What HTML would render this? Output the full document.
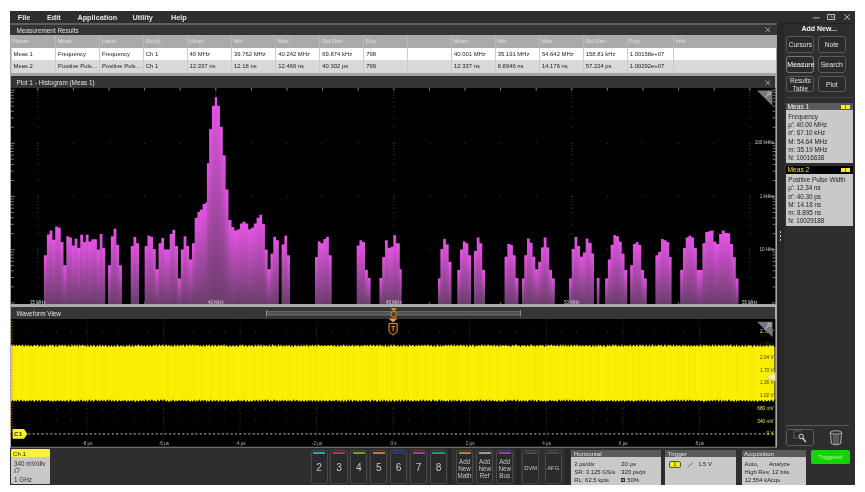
<!DOCTYPE html><html><head><meta charset="utf-8"><title>Oscilloscope</title><style>
*{box-sizing:border-box;margin:0;padding:0}
html,body{width:865px;height:492px;background:#fff;overflow:hidden}
body{font-family:"Liberation Sans",sans-serif;position:relative;color:#ddd}
#app{position:absolute;left:9.5px;top:10.5px;width:845px;height:474px;background:#2e2e2e;overflow:hidden;filter:blur(0.4px)}
.abs{position:absolute}
.t{position:absolute;white-space:nowrap;line-height:1}
.menu{position:absolute;left:0;top:0;width:845px;height:12.5px;background:#2e2e2e}
.menu span{position:absolute;top:3px;font-size:7.3px;font-weight:bold;color:#e4e4e4;line-height:1}
.blk{position:absolute;background:#000}
.ptitle{position:absolute;background:#343434;color:#e0e0e0;font-size:6.4px;line-height:1}
.ptitle b{position:absolute;left:6.6px;top:3.4px;font-weight:normal}
.x{position:absolute;width:5.6px;height:5.6px}
.th{position:absolute;top:0;height:12.7px;font-size:5.8px;color:#e2e2e2;line-height:1;padding:4.6px 0 0 1.5px;border-left:0.7px solid #b8b8b8}
.td{position:absolute;height:12.7px;font-size:5.9px;color:#222;line-height:1;padding:4.1px 0 0 2px;border-left:0.7px solid #ccc;white-space:nowrap;overflow:hidden}
.btn{position:absolute;border:0.8px solid #5a5a5a;border-radius:3px;background:#2b2b2b;color:#e0e0e0;font-size:6.6px;text-align:center;line-height:1}
.badge{position:absolute;background:#c9c9c9;color:#222;font-size:5.9px;line-height:1;overflow:hidden}
.badge .h{position:absolute;left:0;top:0;right:0;height:7.6px;font-size:6.2px;padding:1px 0 0 2.5px;line-height:1}
.badge .l{position:absolute;left:3px;white-space:nowrap}
.chb{position:absolute;top:439.2px;height:34.4px;width:17.2px;background:#2a2a2a;border:0.8px solid #4a4a4a;border-radius:2.5px;color:#c6c6c6;text-align:center}
.chb i{position:absolute;left:1.5px;right:1.5px;top:1.6px;height:2.2px;display:block}
.chb b{position:absolute;left:0;right:0;top:12.2px;font-weight:normal;font-size:10.2px;line-height:1}
.chb em{position:absolute;left:-1px;right:-1px;top:6.9px;font-style:normal;font-size:6.3px;line-height:7.3px;display:block}
</style></head><body><div id="app">
<div class="menu">
<span style="left:8.3px">File</span>
<span style="left:37.5px">Edit</span>
<span style="left:67.9px">Application</span>
<span style="left:123.1px">Utility</span>
<span style="left:161.5px">Help</span>
<svg class="abs" style="left:788px;top:0;width:57px;height:12.5px" viewBox="0 0 57 12.5"><g stroke="#c8c8c8" stroke-width="0.9" fill="none"><path d="M15 6.9h6.6"/><rect x="29.6" y="3.4" width="7" height="5"/><path d="M33 3.6v2.6h3.4" stroke-width="0.6"/><path d="M46.2 3.3l5.8 5.6M52 3.3l-5.8 5.6"/></g></svg>
</div>
<div class="blk" style="left:0;top:12px;width:845px;height:0.7px;background:#222"></div>
<div class="blk" style="left:0.5px;top:12.7px;width:766.5px;height:1.9px;background:#5e5e5e"></div>
<div class="abs" style="left:0.5px;top:14.5px;width:766.5px;height:50.6px;background:#a6a6a6"></div>
<div class="ptitle" style="left:0.5px;top:14.5px;width:766.5px;height:10px"><b style="top:3.4px">Measurement Results</b></div>
<svg class="x" style="left:755px;top:16.6px" viewBox="0 0 6 6"><path d="M0.3 0.3l5.4 5.4M5.7 0.3l-5.4 5.4" stroke="#c4c4c4" stroke-width="0.8"/></svg>
<div class="abs" style="left:1.5px;top:24.4px;width:764.5px;height:12.7px;background:#aaaaaa">
<div class="th" style="left:-0.5px;width:44.5px">Name</div>
<div class="th" style="left:44px;width:44px">Meas</div>
<div class="th" style="left:88px;width:43.8px">Label</div>
<div class="th" style="left:131.8px;width:43.8px">Src(s)</div>
<div class="th" style="left:175.6px;width:44.4px">Mean'</div>
<div class="th" style="left:220px;width:44.2px">Min'</div>
<div class="th" style="left:264.2px;width:44.1px">Max'</div>
<div class="th" style="left:308.3px;width:43.9px">Std Dev'</div>
<div class="th" style="left:352.2px;width:43.8px">Pop'</div>
<div class="th" style="left:396px;width:44px"></div>
<div class="th" style="left:440px;width:43.7px">Mean</div>
<div class="th" style="left:483.7px;width:44.2px">Min</div>
<div class="th" style="left:527.9px;width:43.8px">Max</div>
<div class="th" style="left:571.7px;width:44.1px">Std Dev</div>
<div class="th" style="left:615.8px;width:46.4px">Pop</div>
<div class="th" style="left:662.2px;width:102.3px">Info</div>
</div>
<div class="abs" style="left:1.5px;top:37.1px;width:764.5px;height:12.7px;background:#ffffff">
<div class="td" style="left:-0.5px;width:44.5px;top:0">Meas 1</div>
<div class="td" style="left:44px;width:44px;top:0">Frequency</div>
<div class="td" style="left:88px;width:43.8px;top:0">Frequency</div>
<div class="td" style="left:131.8px;width:43.8px;top:0">Ch 1</div>
<div class="td" style="left:175.6px;width:44.4px;top:0">40 MHz</div>
<div class="td" style="left:220px;width:44.2px;top:0">39.762 MHz</div>
<div class="td" style="left:264.2px;width:44.1px;top:0">40.242 MHz</div>
<div class="td" style="left:308.3px;width:43.9px;top:0">69.874 kHz</div>
<div class="td" style="left:352.2px;width:43.8px;top:0">798</div>
<div class="td" style="left:396px;width:44px;top:0"></div>
<div class="td" style="left:440px;width:43.7px;top:0">40.001 MHz</div>
<div class="td" style="left:483.7px;width:44.2px;top:0">35.191 MHz</div>
<div class="td" style="left:527.9px;width:43.8px;top:0">54.642 MHz</div>
<div class="td" style="left:571.7px;width:44.1px;top:0">158.81 kHz</div>
<div class="td" style="left:615.8px;width:46.4px;top:0">1.00158e+07</div>
<div class="td" style="left:662.2px;width:102.3px;top:0"></div>
</div>
<div class="abs" style="left:1.5px;top:49.8px;width:764.5px;height:12.7px;background:#d9d9d9">
<div class="td" style="left:-0.5px;width:44.5px;top:0">Meas 2</div>
<div class="td" style="left:44px;width:44px;top:0">Positive Puls…</div>
<div class="td" style="left:88px;width:43.8px;top:0">Positive Puls…</div>
<div class="td" style="left:131.8px;width:43.8px;top:0">Ch 1</div>
<div class="td" style="left:175.6px;width:44.4px;top:0">12.337 ns</div>
<div class="td" style="left:220px;width:44.2px;top:0">12.18 ns</div>
<div class="td" style="left:264.2px;width:44.1px;top:0">12.466 ns</div>
<div class="td" style="left:308.3px;width:43.9px;top:0">40.302 ps</div>
<div class="td" style="left:352.2px;width:43.8px;top:0">799</div>
<div class="td" style="left:396px;width:44px;top:0"></div>
<div class="td" style="left:440px;width:43.7px;top:0">12.337 ns</div>
<div class="td" style="left:483.7px;width:44.2px;top:0">8.8946 ns</div>
<div class="td" style="left:527.9px;width:43.8px;top:0">14.176 ns</div>
<div class="td" style="left:571.7px;width:44.1px;top:0">57.224 ps</div>
<div class="td" style="left:615.8px;width:46.4px;top:0">1.00292e+07</div>
<div class="td" style="left:662.2px;width:102.3px;top:0"></div>
</div>
<div class="abs" style="left:0.5px;top:65.1px;width:766.5px;height:231px;background:#a6a6a6"></div>
<div class="ptitle" style="left:1.7px;top:65.3px;width:764.1px;height:12px;border-top:1px solid #2a2a2a"><b style="top:2.8px;left:5.4px">Plot 1 - Histogram (Meas 1)</b></div>
<svg class="x" style="left:755px;top:69.2px" viewBox="0 0 6 6"><path d="M0.3 0.3l5.4 5.4M5.7 0.3l-5.4 5.4" stroke="#c4c4c4" stroke-width="0.8"/></svg>
<svg class="abs" style="left:1.7px;top:77.1px;width:764.4px;height:216.6px" viewBox="11.2 87.6 764.4 216.6">
<defs><linearGradient id="g" x1="0" y1="0" x2="0" y2="1"><stop offset="0" stop-color="#e654e6"/><stop offset="1" stop-color="#6a3e6b"/></linearGradient></defs>
<rect x="11.2" y="87.6" width="764.4" height="216.6" fill="#000"/>
<path d="M38 87.6v2.4M73.6 87.6v2.4M109.2 87.6v2.4M144.8 87.6v2.4M180.4 87.6v2.4M216 87.6v2.4M251.6 87.6v2.4M287.2 87.6v2.4M322.8 87.6v2.4M358.4 87.6v2.4M394 87.6v2.4M429.6 87.6v2.4M465.2 87.6v2.4M500.8 87.6v2.4M536.4 87.6v2.4M572 87.6v2.4M607.6 87.6v2.4M643.2 87.6v2.4M678.8 87.6v2.4M714.4 87.6v2.4M750 87.6v2.4M38 304.2v-2.2M73.6 304.2v-2.2M109.2 304.2v-2.2M144.8 304.2v-2.2M180.4 304.2v-2.2M216 304.2v-2.2M251.6 304.2v-2.2M287.2 304.2v-2.2M322.8 304.2v-2.2M358.4 304.2v-2.2M394 304.2v-2.2M429.6 304.2v-2.2M465.2 304.2v-2.2M500.8 304.2v-2.2M536.4 304.2v-2.2M572 304.2v-2.2M607.6 304.2v-2.2M643.2 304.2v-2.2M678.8 304.2v-2.2M714.4 304.2v-2.2M750 304.2v-2.2" stroke="#c4c4c4" stroke-width="0.7" fill="none"/>
<path d="M11.2 89.7h3.8M775.6 89.7h-3.8M11.2 126.89h2.8M775.6 126.89h-2.8M11.2 117.52h2.8M775.6 117.52h-2.8M11.2 110.87h2.8M775.6 110.87h-2.8M11.2 105.71h2.8M775.6 105.71h-2.8M11.2 101.5h2.8M775.6 101.5h-2.8M11.2 97.94h2.8M775.6 97.94h-2.8M11.2 94.86h2.8M775.6 94.86h-2.8M11.2 92.13h2.8M775.6 92.13h-2.8M11.2 142.9h3.8M775.6 142.9h-3.8M11.2 180.09h2.8M775.6 180.09h-2.8M11.2 170.72h2.8M775.6 170.72h-2.8M11.2 164.07h2.8M775.6 164.07h-2.8M11.2 158.91h2.8M775.6 158.91h-2.8M11.2 154.7h2.8M775.6 154.7h-2.8M11.2 151.14h2.8M775.6 151.14h-2.8M11.2 148.06h2.8M775.6 148.06h-2.8M11.2 145.33h2.8M775.6 145.33h-2.8M11.2 196.1h3.8M775.6 196.1h-3.8M11.2 233.29h2.8M775.6 233.29h-2.8M11.2 223.92h2.8M775.6 223.92h-2.8M11.2 217.27h2.8M775.6 217.27h-2.8M11.2 212.11h2.8M775.6 212.11h-2.8M11.2 207.9h2.8M775.6 207.9h-2.8M11.2 204.34h2.8M775.6 204.34h-2.8M11.2 201.26h2.8M775.6 201.26h-2.8M11.2 198.53h2.8M775.6 198.53h-2.8M11.2 249.3h3.8M775.6 249.3h-3.8M11.2 286.49h2.8M775.6 286.49h-2.8M11.2 277.12h2.8M775.6 277.12h-2.8M11.2 270.47h2.8M775.6 270.47h-2.8M11.2 265.31h2.8M775.6 265.31h-2.8M11.2 261.1h2.8M775.6 261.1h-2.8M11.2 257.54h2.8M775.6 257.54h-2.8M11.2 254.46h2.8M775.6 254.46h-2.8M11.2 251.73h2.8M775.6 251.73h-2.8M11.2 302.5h3.8M775.6 302.5h-3.8" stroke="#c8c8c8" stroke-width="0.6" fill="none"/>
<path d="M37.55 89.7h0.9M37.55 126.89h0.9M37.55 117.52h0.9M37.55 110.87h0.9M37.55 105.71h0.9M37.55 101.5h0.9M37.55 97.94h0.9M37.55 94.86h0.9M37.55 92.13h0.9M37.55 142.9h0.9M37.55 180.09h0.9M37.55 170.72h0.9M37.55 164.07h0.9M37.55 158.91h0.9M37.55 154.7h0.9M37.55 151.14h0.9M37.55 148.06h0.9M37.55 145.33h0.9M37.55 196.1h0.9M37.55 233.29h0.9M37.55 223.92h0.9M37.55 217.27h0.9M37.55 212.11h0.9M37.55 207.9h0.9M37.55 204.34h0.9M37.55 201.26h0.9M37.55 198.53h0.9M37.55 249.3h0.9M37.55 286.49h0.9M37.55 277.12h0.9M37.55 270.47h0.9M37.55 265.31h0.9M37.55 261.1h0.9M37.55 257.54h0.9M37.55 254.46h0.9M37.55 251.73h0.9M37.55 302.5h0.9M215.55 89.7h0.9M215.55 126.89h0.9M215.55 117.52h0.9M215.55 110.87h0.9M215.55 105.71h0.9M215.55 101.5h0.9M215.55 97.94h0.9M215.55 94.86h0.9M215.55 92.13h0.9M215.55 142.9h0.9M215.55 180.09h0.9M215.55 170.72h0.9M215.55 164.07h0.9M215.55 158.91h0.9M215.55 154.7h0.9M215.55 151.14h0.9M215.55 148.06h0.9M215.55 145.33h0.9M215.55 196.1h0.9M215.55 233.29h0.9M215.55 223.92h0.9M215.55 217.27h0.9M215.55 212.11h0.9M215.55 207.9h0.9M215.55 204.34h0.9M215.55 201.26h0.9M215.55 198.53h0.9M215.55 249.3h0.9M215.55 286.49h0.9M215.55 277.12h0.9M215.55 270.47h0.9M215.55 265.31h0.9M215.55 261.1h0.9M215.55 257.54h0.9M215.55 254.46h0.9M215.55 251.73h0.9M215.55 302.5h0.9M393.55 89.7h0.9M393.55 126.89h0.9M393.55 117.52h0.9M393.55 110.87h0.9M393.55 105.71h0.9M393.55 101.5h0.9M393.55 97.94h0.9M393.55 94.86h0.9M393.55 92.13h0.9M393.55 142.9h0.9M393.55 180.09h0.9M393.55 170.72h0.9M393.55 164.07h0.9M393.55 158.91h0.9M393.55 154.7h0.9M393.55 151.14h0.9M393.55 148.06h0.9M393.55 145.33h0.9M393.55 196.1h0.9M393.55 233.29h0.9M393.55 223.92h0.9M393.55 217.27h0.9M393.55 212.11h0.9M393.55 207.9h0.9M393.55 204.34h0.9M393.55 201.26h0.9M393.55 198.53h0.9M393.55 249.3h0.9M393.55 286.49h0.9M393.55 277.12h0.9M393.55 270.47h0.9M393.55 265.31h0.9M393.55 261.1h0.9M393.55 257.54h0.9M393.55 254.46h0.9M393.55 251.73h0.9M393.55 302.5h0.9M571.55 89.7h0.9M571.55 126.89h0.9M571.55 117.52h0.9M571.55 110.87h0.9M571.55 105.71h0.9M571.55 101.5h0.9M571.55 97.94h0.9M571.55 94.86h0.9M571.55 92.13h0.9M571.55 142.9h0.9M571.55 180.09h0.9M571.55 170.72h0.9M571.55 164.07h0.9M571.55 158.91h0.9M571.55 154.7h0.9M571.55 151.14h0.9M571.55 148.06h0.9M571.55 145.33h0.9M571.55 196.1h0.9M571.55 233.29h0.9M571.55 223.92h0.9M571.55 217.27h0.9M571.55 212.11h0.9M571.55 207.9h0.9M571.55 204.34h0.9M571.55 201.26h0.9M571.55 198.53h0.9M571.55 249.3h0.9M571.55 286.49h0.9M571.55 277.12h0.9M571.55 270.47h0.9M571.55 265.31h0.9M571.55 261.1h0.9M571.55 257.54h0.9M571.55 254.46h0.9M571.55 251.73h0.9M571.55 302.5h0.9M749.55 89.7h0.9M749.55 126.89h0.9M749.55 117.52h0.9M749.55 110.87h0.9M749.55 105.71h0.9M749.55 101.5h0.9M749.55 97.94h0.9M749.55 94.86h0.9M749.55 92.13h0.9M749.55 142.9h0.9M749.55 180.09h0.9M749.55 170.72h0.9M749.55 164.07h0.9M749.55 158.91h0.9M749.55 154.7h0.9M749.55 151.14h0.9M749.55 148.06h0.9M749.55 145.33h0.9M749.55 196.1h0.9M749.55 233.29h0.9M749.55 223.92h0.9M749.55 217.27h0.9M749.55 212.11h0.9M749.55 207.9h0.9M749.55 204.34h0.9M749.55 201.26h0.9M749.55 198.53h0.9M749.55 249.3h0.9M749.55 286.49h0.9M749.55 277.12h0.9M749.55 270.47h0.9M749.55 265.31h0.9M749.55 261.1h0.9M749.55 257.54h0.9M749.55 254.46h0.9M749.55 251.73h0.9M749.55 302.5h0.9M37.55 89.7h0.9M73.15 89.7h0.9M108.75 89.7h0.9M144.35 89.7h0.9M179.95 89.7h0.9M215.55 89.7h0.9M251.15 89.7h0.9M286.75 89.7h0.9M322.35 89.7h0.9M357.95 89.7h0.9M393.55 89.7h0.9M429.15 89.7h0.9M464.75 89.7h0.9M500.35 89.7h0.9M535.95 89.7h0.9M571.55 89.7h0.9M607.15 89.7h0.9M642.75 89.7h0.9M678.35 89.7h0.9M713.95 89.7h0.9M749.55 89.7h0.9M37.55 142.9h0.9M73.15 142.9h0.9M108.75 142.9h0.9M144.35 142.9h0.9M179.95 142.9h0.9M215.55 142.9h0.9M251.15 142.9h0.9M286.75 142.9h0.9M322.35 142.9h0.9M357.95 142.9h0.9M393.55 142.9h0.9M429.15 142.9h0.9M464.75 142.9h0.9M500.35 142.9h0.9M535.95 142.9h0.9M571.55 142.9h0.9M607.15 142.9h0.9M642.75 142.9h0.9M678.35 142.9h0.9M713.95 142.9h0.9M749.55 142.9h0.9M37.55 196.1h0.9M73.15 196.1h0.9M108.75 196.1h0.9M144.35 196.1h0.9M179.95 196.1h0.9M215.55 196.1h0.9M251.15 196.1h0.9M286.75 196.1h0.9M322.35 196.1h0.9M357.95 196.1h0.9M393.55 196.1h0.9M429.15 196.1h0.9M464.75 196.1h0.9M500.35 196.1h0.9M535.95 196.1h0.9M571.55 196.1h0.9M607.15 196.1h0.9M642.75 196.1h0.9M678.35 196.1h0.9M713.95 196.1h0.9M749.55 196.1h0.9M37.55 249.3h0.9M73.15 249.3h0.9M108.75 249.3h0.9M144.35 249.3h0.9M179.95 249.3h0.9M215.55 249.3h0.9M251.15 249.3h0.9M286.75 249.3h0.9M322.35 249.3h0.9M357.95 249.3h0.9M393.55 249.3h0.9M429.15 249.3h0.9M464.75 249.3h0.9M500.35 249.3h0.9M535.95 249.3h0.9M571.55 249.3h0.9M607.15 249.3h0.9M642.75 249.3h0.9M678.35 249.3h0.9M713.95 249.3h0.9M749.55 249.3h0.9M37.55 302.5h0.9M73.15 302.5h0.9M108.75 302.5h0.9M144.35 302.5h0.9M179.95 302.5h0.9M215.55 302.5h0.9M251.15 302.5h0.9M286.75 302.5h0.9M322.35 302.5h0.9M357.95 302.5h0.9M393.55 302.5h0.9M429.15 302.5h0.9M464.75 302.5h0.9M500.35 302.5h0.9M535.95 302.5h0.9M571.55 302.5h0.9M607.15 302.5h0.9M642.75 302.5h0.9M678.35 302.5h0.9M713.95 302.5h0.9M749.55 302.5h0.9" stroke="#5c5c5c" stroke-width="0.8" fill="none"/>
<rect x="46.35" y="254.92" width="1.4" height="48.98" fill="url(#g)"/>
<rect x="49.13" y="234.07" width="1.4" height="69.83" fill="url(#g)"/>
<rect x="51.91" y="239.4" width="1.4" height="64.5" fill="url(#g)"/>
<rect x="54.69" y="239.4" width="1.4" height="64.5" fill="url(#g)"/>
<rect x="57.47" y="227.35" width="1.4" height="76.55" fill="url(#g)"/>
<rect x="60.25" y="241.71" width="1.4" height="62.19" fill="url(#g)"/>
<rect x="63.03" y="264.89" width="1.4" height="39.01" fill="url(#g)"/>
<rect x="65.81" y="264.89" width="1.4" height="39.01" fill="url(#g)"/>
<rect x="68.59" y="237.08" width="1.4" height="66.82" fill="url(#g)"/>
<rect x="71.37" y="245.19" width="1.4" height="58.71" fill="url(#g)"/>
<rect x="74.16" y="245.19" width="1.4" height="58.71" fill="url(#g)"/>
<rect x="76.94" y="247.51" width="1.4" height="56.39" fill="url(#g)"/>
<rect x="79.72" y="247.51" width="1.4" height="56.39" fill="url(#g)"/>
<rect x="82.5" y="241.71" width="1.4" height="62.19" fill="url(#g)"/>
<rect x="85.28" y="241.71" width="1.4" height="62.19" fill="url(#g)"/>
<rect x="88.06" y="241.25" width="1.4" height="62.65" fill="url(#g)"/>
<rect x="90.84" y="241.25" width="1.4" height="62.65" fill="url(#g)"/>
<rect x="93.62" y="238.93" width="1.4" height="64.97" fill="url(#g)"/>
<rect x="96.4" y="249.13" width="1.4" height="54.77" fill="url(#g)"/>
<rect x="99.18" y="249.13" width="1.4" height="54.77" fill="url(#g)"/>
<rect x="101.97" y="247.51" width="1.4" height="56.39" fill="url(#g)"/>
<rect x="110.31" y="264.89" width="1.4" height="39.01" fill="url(#g)"/>
<rect x="113.09" y="235.92" width="1.4" height="67.98" fill="url(#g)"/>
<rect x="115.87" y="244.5" width="1.4" height="59.4" fill="url(#g)"/>
<rect x="118.65" y="264.89" width="1.4" height="39.01" fill="url(#g)"/>
<rect x="133.02" y="245.65" width="1.4" height="58.25" fill="url(#g)"/>
<rect x="135.8" y="242.87" width="1.4" height="61.03" fill="url(#g)"/>
<rect x="146.92" y="245.65" width="1.4" height="58.25" fill="url(#g)"/>
<rect x="149.71" y="236.38" width="1.4" height="67.52" fill="url(#g)"/>
<rect x="152.49" y="248.67" width="1.4" height="55.23" fill="url(#g)"/>
<rect x="155.27" y="268.83" width="1.4" height="35.07" fill="url(#g)"/>
<rect x="158.05" y="268.83" width="1.4" height="35.07" fill="url(#g)"/>
<rect x="160.83" y="242.87" width="1.4" height="61.03" fill="url(#g)"/>
<rect x="163.61" y="249.13" width="1.4" height="54.77" fill="url(#g)"/>
<rect x="166.39" y="249.13" width="1.4" height="54.77" fill="url(#g)"/>
<rect x="169.17" y="249.13" width="1.4" height="54.77" fill="url(#g)"/>
<rect x="171.95" y="233.6" width="1.4" height="70.3" fill="url(#g)"/>
<rect x="174.73" y="245.65" width="1.4" height="58.25" fill="url(#g)"/>
<rect x="177.52" y="278.1" width="1.4" height="25.8" fill="url(#g)"/>
<rect x="180.3" y="278.1" width="1.4" height="25.8" fill="url(#g)"/>
<rect x="183.08" y="249.13" width="1.4" height="54.77" fill="url(#g)"/>
<rect x="185.86" y="245.65" width="1.4" height="58.25" fill="url(#g)"/>
<rect x="188.64" y="259.1" width="1.4" height="44.8" fill="url(#g)"/>
<rect x="191.42" y="259.1" width="1.4" height="44.8" fill="url(#g)"/>
<rect x="194.2" y="242.87" width="1.4" height="61.03" fill="url(#g)"/>
<rect x="196.98" y="217.38" width="1.4" height="86.52" fill="url(#g)"/>
<rect x="202.08" y="209.27" width="1.4" height="94.63" fill="url(#g)"/>
<rect x="204.86" y="203.48" width="1.4" height="100.42" fill="url(#g)"/>
<rect x="206.4" y="202" width="1.4" height="101.9" fill="url(#g)"/>
<rect x="208.62" y="162.92" width="1.4" height="140.98" fill="url(#g)"/>
<rect x="211.47" y="128.74" width="1.4" height="175.16" fill="url(#g)"/>
<rect x="214.31" y="105.37" width="1.4" height="198.53" fill="url(#g)"/>
<rect x="216.59" y="105.37" width="1.4" height="198.53" fill="url(#g)"/>
<rect x="219.44" y="126.46" width="1.4" height="177.44" fill="url(#g)"/>
<rect x="222.29" y="154.95" width="1.4" height="148.95" fill="url(#g)"/>
<rect x="225.14" y="189.13" width="1.4" height="114.77" fill="url(#g)"/>
<rect x="227.99" y="219.7" width="1.4" height="84.2" fill="url(#g)"/>
<rect x="231.05" y="226.65" width="1.4" height="77.25" fill="url(#g)"/>
<rect x="233.83" y="230.13" width="1.4" height="73.77" fill="url(#g)"/>
<rect x="236.61" y="230.13" width="1.4" height="73.77" fill="url(#g)"/>
<rect x="239.39" y="228.97" width="1.4" height="74.93" fill="url(#g)"/>
<rect x="242.17" y="223.17" width="1.4" height="80.73" fill="url(#g)"/>
<rect x="244.95" y="223.17" width="1.4" height="80.73" fill="url(#g)"/>
<rect x="247.74" y="228.97" width="1.4" height="74.93" fill="url(#g)"/>
<rect x="250.52" y="228.97" width="1.4" height="74.93" fill="url(#g)"/>
<rect x="253.3" y="227.35" width="1.4" height="76.55" fill="url(#g)"/>
<rect x="256.08" y="223.17" width="1.4" height="80.73" fill="url(#g)"/>
<rect x="258.86" y="217.38" width="1.4" height="86.52" fill="url(#g)"/>
<rect x="261.64" y="223.64" width="1.4" height="80.26" fill="url(#g)"/>
<rect x="264.42" y="249.13" width="1.4" height="54.77" fill="url(#g)"/>
<rect x="267.2" y="268.83" width="1.4" height="35.07" fill="url(#g)"/>
<rect x="269.98" y="268.83" width="1.4" height="35.07" fill="url(#g)"/>
<rect x="272.76" y="253.3" width="1.4" height="50.6" fill="url(#g)"/>
<rect x="275.55" y="239.86" width="1.4" height="64.04" fill="url(#g)"/>
<rect x="283.89" y="244.03" width="1.4" height="59.87" fill="url(#g)"/>
<rect x="286.67" y="254.92" width="1.4" height="48.98" fill="url(#g)"/>
<rect x="317.26" y="256.78" width="1.4" height="47.12" fill="url(#g)"/>
<rect x="320.04" y="242.87" width="1.4" height="61.03" fill="url(#g)"/>
<rect x="322.82" y="242.87" width="1.4" height="61.03" fill="url(#g)"/>
<rect x="325.6" y="238.7" width="1.4" height="65.2" fill="url(#g)"/>
<rect x="328.38" y="254.92" width="1.4" height="48.98" fill="url(#g)"/>
<rect x="358.98" y="245.19" width="1.4" height="58.71" fill="url(#g)"/>
<rect x="361.76" y="241.71" width="1.4" height="62.19" fill="url(#g)"/>
<rect x="364.54" y="269.52" width="1.4" height="34.38" fill="url(#g)"/>
<rect x="367.32" y="277.64" width="1.4" height="26.26" fill="url(#g)"/>
<rect x="381.69" y="277.64" width="1.4" height="26.26" fill="url(#g)"/>
<rect x="384.47" y="256.78" width="1.4" height="47.12" fill="url(#g)"/>
<rect x="387.25" y="247.51" width="1.4" height="56.39" fill="url(#g)"/>
<rect x="390.03" y="247.51" width="1.4" height="56.39" fill="url(#g)"/>
<rect x="392.81" y="246.35" width="1.4" height="57.55" fill="url(#g)"/>
<rect x="395.59" y="242.87" width="1.4" height="61.03" fill="url(#g)"/>
<rect x="399.3" y="268.83" width="1.4" height="35.07" fill="url(#g)"/>
<rect x="439.86" y="278.1" width="1.4" height="25.8" fill="url(#g)"/>
<rect x="442.64" y="248.67" width="1.4" height="55.23" fill="url(#g)"/>
<rect x="445.42" y="244.03" width="1.4" height="59.87" fill="url(#g)"/>
<rect x="448.2" y="261.41" width="1.4" height="42.49" fill="url(#g)"/>
<rect x="459.55" y="269.52" width="1.4" height="34.38" fill="url(#g)"/>
<rect x="462.34" y="249.13" width="1.4" height="54.77" fill="url(#g)"/>
<rect x="465.12" y="242.87" width="1.4" height="61.03" fill="url(#g)"/>
<rect x="467.9" y="254.92" width="1.4" height="48.98" fill="url(#g)"/>
<rect x="476.24" y="250.52" width="1.4" height="53.38" fill="url(#g)"/>
<rect x="479.02" y="242.87" width="1.4" height="61.03" fill="url(#g)"/>
<rect x="481.8" y="269.52" width="1.4" height="34.38" fill="url(#g)"/>
<rect x="506.83" y="256.32" width="1.4" height="47.58" fill="url(#g)"/>
<rect x="509.61" y="244.5" width="1.4" height="59.4" fill="url(#g)"/>
<rect x="512.39" y="254.92" width="1.4" height="48.98" fill="url(#g)"/>
<rect x="515.17" y="277.64" width="1.4" height="26.26" fill="url(#g)"/>
<rect x="523.75" y="278.1" width="1.4" height="25.8" fill="url(#g)"/>
<rect x="526.53" y="254.92" width="1.4" height="48.98" fill="url(#g)"/>
<rect x="529.31" y="242.41" width="1.4" height="61.49" fill="url(#g)"/>
<rect x="532.09" y="256.32" width="1.4" height="47.58" fill="url(#g)"/>
<rect x="534.87" y="268.83" width="1.4" height="35.07" fill="url(#g)"/>
<rect x="537.65" y="268.83" width="1.4" height="35.07" fill="url(#g)"/>
<rect x="540.44" y="261.41" width="1.4" height="42.49" fill="url(#g)"/>
<rect x="543.22" y="247.05" width="1.4" height="56.85" fill="url(#g)"/>
<rect x="546" y="247.05" width="1.4" height="56.85" fill="url(#g)"/>
<rect x="548.78" y="269.52" width="1.4" height="34.38" fill="url(#g)"/>
<rect x="551.56" y="278.1" width="1.4" height="25.8" fill="url(#g)"/>
<rect x="571.26" y="278.1" width="1.4" height="25.8" fill="url(#g)"/>
<rect x="574.04" y="248.67" width="1.4" height="55.23" fill="url(#g)"/>
<rect x="576.82" y="245.65" width="1.4" height="58.25" fill="url(#g)"/>
<rect x="579.6" y="256.32" width="1.4" height="47.58" fill="url(#g)"/>
<rect x="582.38" y="256.32" width="1.4" height="47.58" fill="url(#g)"/>
<rect x="585.16" y="252.14" width="1.4" height="51.76" fill="url(#g)"/>
<rect x="587.94" y="242.41" width="1.4" height="61.49" fill="url(#g)"/>
<rect x="591.15" y="253.3" width="1.4" height="50.6" fill="url(#g)"/>
<rect x="607.38" y="278.1" width="1.4" height="25.8" fill="url(#g)"/>
<rect x="610.16" y="259.1" width="1.4" height="44.8" fill="url(#g)"/>
<rect x="612.94" y="244.5" width="1.4" height="59.4" fill="url(#g)"/>
<rect x="615.72" y="235.92" width="1.4" height="67.98" fill="url(#g)"/>
<rect x="618.5" y="241.25" width="1.4" height="62.65" fill="url(#g)"/>
<rect x="621.28" y="253.3" width="1.4" height="50.6" fill="url(#g)"/>
<rect x="624.06" y="269.52" width="1.4" height="34.38" fill="url(#g)"/>
<rect x="632.41" y="264.89" width="1.4" height="39.01" fill="url(#g)"/>
<rect x="635.19" y="243.57" width="1.4" height="60.33" fill="url(#g)"/>
<rect x="637.97" y="244.5" width="1.4" height="59.4" fill="url(#g)"/>
<rect x="640.75" y="269.52" width="1.4" height="34.38" fill="url(#g)"/>
<rect x="643.53" y="278.1" width="1.4" height="25.8" fill="url(#g)"/>
<rect x="657.67" y="254.92" width="1.4" height="48.98" fill="url(#g)"/>
<rect x="660.45" y="251.45" width="1.4" height="52.45" fill="url(#g)"/>
<rect x="663.23" y="239.86" width="1.4" height="64.04" fill="url(#g)"/>
<rect x="666.01" y="241.71" width="1.4" height="62.19" fill="url(#g)"/>
<rect x="668.79" y="256.78" width="1.4" height="47.12" fill="url(#g)"/>
<rect x="682.46" y="269.52" width="1.4" height="34.38" fill="url(#g)"/>
<rect x="685.24" y="247.51" width="1.4" height="56.39" fill="url(#g)"/>
<rect x="688.03" y="237.08" width="1.4" height="66.82" fill="url(#g)"/>
<rect x="690.81" y="237.08" width="1.4" height="66.82" fill="url(#g)"/>
<rect x="693.59" y="247.51" width="1.4" height="56.39" fill="url(#g)"/>
<rect x="696.37" y="269.52" width="1.4" height="34.38" fill="url(#g)"/>
<rect x="699.15" y="269.52" width="1.4" height="34.38" fill="url(#g)"/>
<rect x="701.93" y="269.52" width="1.4" height="34.38" fill="url(#g)"/>
<rect x="704.71" y="242.87" width="1.4" height="61.03" fill="url(#g)"/>
<rect x="707.49" y="231.75" width="1.4" height="72.15" fill="url(#g)"/>
<rect x="710.27" y="230.82" width="1.4" height="73.08" fill="url(#g)"/>
<rect x="713.05" y="241.25" width="1.4" height="62.65" fill="url(#g)"/>
<rect x="715.84" y="243.57" width="1.4" height="60.33" fill="url(#g)"/>
<rect x="718.62" y="243.57" width="1.4" height="60.33" fill="url(#g)"/>
<rect x="721.4" y="233.6" width="1.4" height="70.3" fill="url(#g)"/>
<rect x="724.18" y="232.44" width="1.4" height="71.46" fill="url(#g)"/>
<rect x="726.96" y="232.91" width="1.4" height="70.99" fill="url(#g)"/>
<rect x="729.74" y="243.57" width="1.4" height="60.33" fill="url(#g)"/>
<rect x="732.52" y="256.78" width="1.4" height="47.12" fill="url(#g)"/>
<rect x="735.3" y="278.1" width="1.4" height="25.8" fill="url(#g)"/>
<rect x="44.03" y="254.92" width="3.01" height="48.98" fill="url(#g)"/>
<rect x="47.05" y="234.07" width="2.78" height="69.83" fill="url(#g)"/>
<rect x="49.83" y="230.13" width="2.78" height="73.77" fill="url(#g)"/>
<rect x="52.61" y="239.4" width="2.78" height="64.5" fill="url(#g)"/>
<rect x="55.39" y="226.19" width="2.78" height="77.71" fill="url(#g)"/>
<rect x="58.17" y="227.35" width="2.78" height="76.55" fill="url(#g)"/>
<rect x="60.95" y="241.71" width="2.78" height="62.19" fill="url(#g)"/>
<rect x="63.73" y="264.89" width="2.78" height="39.01" fill="url(#g)"/>
<rect x="66.51" y="235.92" width="2.78" height="67.98" fill="url(#g)"/>
<rect x="69.29" y="237.08" width="2.78" height="66.82" fill="url(#g)"/>
<rect x="72.07" y="245.19" width="2.78" height="58.71" fill="url(#g)"/>
<rect x="74.86" y="238.24" width="2.78" height="65.66" fill="url(#g)"/>
<rect x="77.64" y="247.51" width="2.78" height="56.39" fill="url(#g)"/>
<rect x="80.42" y="234.3" width="2.78" height="69.6" fill="url(#g)"/>
<rect x="83.2" y="241.71" width="2.78" height="62.19" fill="url(#g)"/>
<rect x="85.98" y="234.3" width="2.78" height="69.6" fill="url(#g)"/>
<rect x="88.76" y="241.25" width="2.78" height="62.65" fill="url(#g)"/>
<rect x="91.54" y="238.93" width="2.78" height="64.97" fill="url(#g)"/>
<rect x="94.32" y="238.93" width="2.78" height="64.97" fill="url(#g)"/>
<rect x="97.1" y="249.13" width="2.78" height="54.77" fill="url(#g)"/>
<rect x="99.88" y="233.6" width="2.78" height="70.3" fill="url(#g)"/>
<rect x="102.67" y="247.51" width="2.78" height="56.39" fill="url(#g)"/>
<rect x="108.23" y="264.89" width="2.78" height="39.01" fill="url(#g)"/>
<rect x="111.01" y="235.92" width="2.78" height="67.98" fill="url(#g)"/>
<rect x="113.79" y="228.27" width="2.78" height="75.63" fill="url(#g)"/>
<rect x="116.57" y="244.5" width="2.78" height="59.4" fill="url(#g)"/>
<rect x="119.35" y="264.89" width="2.78" height="39.01" fill="url(#g)"/>
<rect x="130.94" y="245.65" width="2.78" height="58.25" fill="url(#g)"/>
<rect x="133.72" y="236.62" width="2.78" height="67.28" fill="url(#g)"/>
<rect x="136.5" y="242.87" width="2.78" height="61.03" fill="url(#g)"/>
<rect x="144.84" y="245.65" width="2.78" height="58.25" fill="url(#g)"/>
<rect x="147.62" y="235.23" width="2.78" height="68.67" fill="url(#g)"/>
<rect x="150.41" y="236.38" width="2.78" height="67.52" fill="url(#g)"/>
<rect x="153.19" y="248.67" width="2.78" height="55.23" fill="url(#g)"/>
<rect x="155.97" y="268.83" width="2.78" height="35.07" fill="url(#g)"/>
<rect x="158.75" y="242.87" width="2.78" height="61.03" fill="url(#g)"/>
<rect x="161.53" y="237.54" width="2.78" height="66.36" fill="url(#g)"/>
<rect x="164.31" y="249.13" width="2.78" height="54.77" fill="url(#g)"/>
<rect x="167.09" y="249.13" width="2.78" height="54.77" fill="url(#g)"/>
<rect x="169.87" y="233.6" width="2.78" height="70.3" fill="url(#g)"/>
<rect x="172.65" y="229.43" width="2.78" height="74.47" fill="url(#g)"/>
<rect x="175.43" y="245.65" width="2.78" height="58.25" fill="url(#g)"/>
<rect x="178.22" y="278.1" width="2.78" height="25.8" fill="url(#g)"/>
<rect x="181" y="249.13" width="2.78" height="54.77" fill="url(#g)"/>
<rect x="183.78" y="235.92" width="2.78" height="67.98" fill="url(#g)"/>
<rect x="186.56" y="245.65" width="2.78" height="58.25" fill="url(#g)"/>
<rect x="189.34" y="259.1" width="2.78" height="44.8" fill="url(#g)"/>
<rect x="192.12" y="242.87" width="2.78" height="61.03" fill="url(#g)"/>
<rect x="194.9" y="217.38" width="2.78" height="86.52" fill="url(#g)"/>
<rect x="197.68" y="211.59" width="2.78" height="92.31" fill="url(#g)"/>
<rect x="200" y="209.27" width="2.78" height="94.63" fill="url(#g)"/>
<rect x="202.78" y="203.48" width="2.78" height="100.42" fill="url(#g)"/>
<rect x="205.56" y="202" width="1.54" height="101.9" fill="url(#g)"/>
<rect x="207.1" y="162.92" width="2.22" height="140.98" fill="url(#g)"/>
<rect x="209.32" y="128.74" width="2.85" height="175.16" fill="url(#g)"/>
<rect x="212.17" y="105.37" width="2.85" height="198.53" fill="url(#g)"/>
<rect x="215.01" y="96.83" width="2.28" height="207.07" fill="url(#g)"/>
<rect x="217.29" y="105.37" width="2.85" height="198.53" fill="url(#g)"/>
<rect x="220.14" y="126.46" width="2.85" height="177.44" fill="url(#g)"/>
<rect x="222.99" y="154.95" width="2.85" height="148.95" fill="url(#g)"/>
<rect x="225.84" y="189.13" width="2.85" height="114.77" fill="url(#g)"/>
<rect x="228.69" y="219.7" width="3.06" height="84.2" fill="url(#g)"/>
<rect x="231.75" y="226.65" width="2.78" height="77.25" fill="url(#g)"/>
<rect x="234.53" y="230.13" width="2.78" height="73.77" fill="url(#g)"/>
<rect x="237.31" y="228.97" width="2.78" height="74.93" fill="url(#g)"/>
<rect x="240.09" y="223.17" width="2.78" height="80.73" fill="url(#g)"/>
<rect x="242.87" y="221.32" width="2.78" height="82.58" fill="url(#g)"/>
<rect x="245.65" y="223.17" width="2.78" height="80.73" fill="url(#g)"/>
<rect x="248.44" y="228.97" width="2.78" height="74.93" fill="url(#g)"/>
<rect x="251.22" y="227.35" width="2.78" height="76.55" fill="url(#g)"/>
<rect x="254" y="223.17" width="2.78" height="80.73" fill="url(#g)"/>
<rect x="256.78" y="217.38" width="2.78" height="86.52" fill="url(#g)"/>
<rect x="259.56" y="214.37" width="2.78" height="89.53" fill="url(#g)"/>
<rect x="262.34" y="223.64" width="2.78" height="80.26" fill="url(#g)"/>
<rect x="265.12" y="249.13" width="2.78" height="54.77" fill="url(#g)"/>
<rect x="267.9" y="268.83" width="2.78" height="35.07" fill="url(#g)"/>
<rect x="270.68" y="253.3" width="2.78" height="50.6" fill="url(#g)"/>
<rect x="273.46" y="236.38" width="2.78" height="67.52" fill="url(#g)"/>
<rect x="276.25" y="239.86" width="2.78" height="64.04" fill="url(#g)"/>
<rect x="281.81" y="244.03" width="2.78" height="59.87" fill="url(#g)"/>
<rect x="284.59" y="235.23" width="2.78" height="68.67" fill="url(#g)"/>
<rect x="287.37" y="254.92" width="2.78" height="48.98" fill="url(#g)"/>
<rect x="315.18" y="256.78" width="2.78" height="47.12" fill="url(#g)"/>
<rect x="317.96" y="241.02" width="2.78" height="62.88" fill="url(#g)"/>
<rect x="320.74" y="242.87" width="2.78" height="61.03" fill="url(#g)"/>
<rect x="323.52" y="238.7" width="2.78" height="65.2" fill="url(#g)"/>
<rect x="326.3" y="236.38" width="2.78" height="67.52" fill="url(#g)"/>
<rect x="329.08" y="254.92" width="2.78" height="48.98" fill="url(#g)"/>
<rect x="356.89" y="245.19" width="2.78" height="58.71" fill="url(#g)"/>
<rect x="359.68" y="239.86" width="2.78" height="64.04" fill="url(#g)"/>
<rect x="362.46" y="241.71" width="2.78" height="62.19" fill="url(#g)"/>
<rect x="365.24" y="269.52" width="2.78" height="34.38" fill="url(#g)"/>
<rect x="368.02" y="277.64" width="2.78" height="26.26" fill="url(#g)"/>
<rect x="379.61" y="277.64" width="2.78" height="26.26" fill="url(#g)"/>
<rect x="382.39" y="256.78" width="2.78" height="47.12" fill="url(#g)"/>
<rect x="385.17" y="239.86" width="2.78" height="64.04" fill="url(#g)"/>
<rect x="387.95" y="247.51" width="2.78" height="56.39" fill="url(#g)"/>
<rect x="390.73" y="246.35" width="2.78" height="57.55" fill="url(#g)"/>
<rect x="393.51" y="234.76" width="2.78" height="69.14" fill="url(#g)"/>
<rect x="396.29" y="242.87" width="3.71" height="61.03" fill="url(#g)"/>
<rect x="400" y="268.83" width="1.85" height="35.07" fill="url(#g)"/>
<rect x="438.24" y="278.1" width="2.32" height="25.8" fill="url(#g)"/>
<rect x="440.56" y="248.67" width="2.78" height="55.23" fill="url(#g)"/>
<rect x="443.34" y="238.7" width="2.78" height="65.2" fill="url(#g)"/>
<rect x="446.12" y="244.03" width="2.78" height="59.87" fill="url(#g)"/>
<rect x="448.9" y="261.41" width="2.78" height="42.49" fill="url(#g)"/>
<rect x="457.47" y="269.52" width="2.78" height="34.38" fill="url(#g)"/>
<rect x="460.25" y="249.13" width="2.78" height="54.77" fill="url(#g)"/>
<rect x="463.04" y="241.02" width="2.78" height="62.88" fill="url(#g)"/>
<rect x="465.82" y="242.87" width="2.78" height="61.03" fill="url(#g)"/>
<rect x="468.6" y="254.92" width="2.78" height="48.98" fill="url(#g)"/>
<rect x="474.16" y="250.52" width="2.78" height="53.38" fill="url(#g)"/>
<rect x="476.94" y="237.08" width="2.78" height="66.82" fill="url(#g)"/>
<rect x="479.72" y="242.87" width="2.78" height="61.03" fill="url(#g)"/>
<rect x="482.5" y="269.52" width="2.78" height="34.38" fill="url(#g)"/>
<rect x="504.75" y="256.32" width="2.78" height="47.58" fill="url(#g)"/>
<rect x="507.53" y="243.57" width="2.78" height="60.33" fill="url(#g)"/>
<rect x="510.31" y="244.5" width="2.78" height="59.4" fill="url(#g)"/>
<rect x="513.09" y="254.92" width="2.78" height="48.98" fill="url(#g)"/>
<rect x="515.87" y="277.64" width="2.78" height="26.26" fill="url(#g)"/>
<rect x="522.13" y="278.1" width="2.32" height="25.8" fill="url(#g)"/>
<rect x="524.45" y="254.92" width="2.78" height="48.98" fill="url(#g)"/>
<rect x="527.23" y="238.24" width="2.78" height="65.66" fill="url(#g)"/>
<rect x="530.01" y="242.41" width="2.78" height="61.49" fill="url(#g)"/>
<rect x="532.79" y="256.32" width="2.78" height="47.58" fill="url(#g)"/>
<rect x="535.57" y="268.83" width="2.78" height="35.07" fill="url(#g)"/>
<rect x="538.35" y="261.41" width="2.78" height="42.49" fill="url(#g)"/>
<rect x="541.14" y="247.05" width="2.78" height="56.85" fill="url(#g)"/>
<rect x="543.92" y="237.08" width="2.78" height="66.82" fill="url(#g)"/>
<rect x="546.7" y="247.05" width="2.78" height="56.85" fill="url(#g)"/>
<rect x="549.48" y="269.52" width="2.78" height="34.38" fill="url(#g)"/>
<rect x="552.26" y="278.1" width="2.78" height="25.8" fill="url(#g)"/>
<rect x="569.18" y="278.1" width="2.78" height="25.8" fill="url(#g)"/>
<rect x="571.96" y="248.67" width="2.78" height="55.23" fill="url(#g)"/>
<rect x="574.74" y="236.62" width="2.78" height="67.28" fill="url(#g)"/>
<rect x="577.52" y="245.65" width="2.78" height="58.25" fill="url(#g)"/>
<rect x="580.3" y="256.32" width="2.78" height="47.58" fill="url(#g)"/>
<rect x="583.08" y="252.14" width="2.78" height="51.76" fill="url(#g)"/>
<rect x="585.86" y="238.24" width="2.78" height="65.66" fill="url(#g)"/>
<rect x="588.64" y="242.41" width="2.78" height="61.49" fill="url(#g)"/>
<rect x="590" y="242.87" width="1.85" height="61.03" fill="url(#g)"/>
<rect x="591.85" y="253.3" width="2.35" height="50.6" fill="url(#g)"/>
<rect x="591.85" y="253.3" width="2.32" height="50.6" fill="url(#g)"/>
<rect x="596.95" y="277.64" width="2.78" height="26.26" fill="url(#g)"/>
<rect x="605.3" y="278.1" width="2.78" height="25.8" fill="url(#g)"/>
<rect x="608.08" y="259.1" width="2.78" height="44.8" fill="url(#g)"/>
<rect x="610.86" y="244.5" width="2.78" height="59.4" fill="url(#g)"/>
<rect x="613.64" y="234.76" width="2.78" height="69.14" fill="url(#g)"/>
<rect x="616.42" y="235.92" width="2.78" height="67.98" fill="url(#g)"/>
<rect x="619.2" y="241.25" width="2.78" height="62.65" fill="url(#g)"/>
<rect x="621.98" y="253.3" width="2.78" height="50.6" fill="url(#g)"/>
<rect x="624.76" y="269.52" width="2.78" height="34.38" fill="url(#g)"/>
<rect x="630.32" y="264.89" width="2.78" height="39.01" fill="url(#g)"/>
<rect x="633.11" y="243.57" width="2.78" height="60.33" fill="url(#g)"/>
<rect x="635.89" y="241.71" width="2.78" height="62.19" fill="url(#g)"/>
<rect x="638.67" y="244.5" width="2.78" height="59.4" fill="url(#g)"/>
<rect x="641.45" y="269.52" width="2.78" height="34.38" fill="url(#g)"/>
<rect x="644.23" y="278.1" width="2.78" height="25.8" fill="url(#g)"/>
<rect x="655.59" y="254.92" width="2.78" height="48.98" fill="url(#g)"/>
<rect x="658.37" y="251.45" width="2.78" height="52.45" fill="url(#g)"/>
<rect x="661.15" y="238.7" width="2.78" height="65.2" fill="url(#g)"/>
<rect x="663.93" y="239.86" width="2.78" height="64.04" fill="url(#g)"/>
<rect x="666.71" y="241.71" width="2.78" height="62.19" fill="url(#g)"/>
<rect x="669.49" y="256.78" width="2.32" height="47.12" fill="url(#g)"/>
<rect x="680.38" y="269.52" width="2.78" height="34.38" fill="url(#g)"/>
<rect x="683.16" y="247.51" width="2.78" height="56.39" fill="url(#g)"/>
<rect x="685.94" y="237.08" width="2.78" height="66.82" fill="url(#g)"/>
<rect x="688.73" y="235.23" width="2.78" height="68.67" fill="url(#g)"/>
<rect x="691.51" y="237.08" width="2.78" height="66.82" fill="url(#g)"/>
<rect x="694.29" y="247.51" width="2.78" height="56.39" fill="url(#g)"/>
<rect x="697.07" y="269.52" width="2.78" height="34.38" fill="url(#g)"/>
<rect x="699.85" y="269.52" width="2.78" height="34.38" fill="url(#g)"/>
<rect x="702.63" y="242.87" width="2.78" height="61.03" fill="url(#g)"/>
<rect x="705.41" y="231.75" width="2.78" height="72.15" fill="url(#g)"/>
<rect x="708.19" y="230.82" width="2.78" height="73.08" fill="url(#g)"/>
<rect x="710.97" y="230.13" width="2.78" height="73.77" fill="url(#g)"/>
<rect x="713.75" y="241.25" width="2.78" height="62.65" fill="url(#g)"/>
<rect x="716.54" y="243.57" width="2.78" height="60.33" fill="url(#g)"/>
<rect x="719.32" y="233.6" width="2.78" height="70.3" fill="url(#g)"/>
<rect x="722.1" y="230.13" width="2.78" height="73.77" fill="url(#g)"/>
<rect x="724.88" y="232.44" width="2.78" height="71.46" fill="url(#g)"/>
<rect x="727.66" y="232.91" width="2.78" height="70.99" fill="url(#g)"/>
<rect x="730.44" y="243.57" width="2.78" height="60.33" fill="url(#g)"/>
<rect x="733.22" y="256.78" width="2.78" height="47.12" fill="url(#g)"/>
<rect x="736" y="278.1" width="2.78" height="25.8" fill="url(#g)"/>
<g font-family="Liberation Sans, sans-serif" font-size="4.6" fill="#cfcfcf">
<text x="774" y="143.9" text-anchor="end">100 kHits</text>
<text x="774" y="197.8" text-anchor="end">1 kHits</text>
<text x="774" y="251" text-anchor="end">10 Hits</text>
<text x="38" y="303.4" text-anchor="middle">35 MHz</text>
<text x="216" y="303.4" text-anchor="middle">40 MHz</text>
<text x="394" y="303.4" text-anchor="middle">45 MHz</text>
<text x="572" y="303.4" text-anchor="middle">50 MHz</text>
<text x="750" y="303.4" text-anchor="middle">55 MHz</text>
</g>
<path d="M757.2 90.2H772.6V105.4z" fill="#787878"/><circle cx="769.5" cy="93" r="1.5" fill="none" stroke="#e0e0e0" stroke-width="0.7"/><path d="M768.4 94.2l-2.6 2.8" stroke="#e0e0e0" stroke-width="0.8"/>
</svg>
<div class="abs" style="left:0.5px;top:294.5px;width:766.5px;height:142.5px;background:#adadad"></div>
<div class="ptitle" style="left:1.7px;top:296.8px;width:764.1px;height:11.7px;background:#363636"><b style="top:3.9px;left:5.4px">Waveform View</b></div>
<svg class="abs" style="left:250px;top:296px;width:270px;height:14px" viewBox="259.5 306.5 270 14"><rect x="266" y="311.3" width="254" height="3.1" fill="#4c4c4c" stroke="#8e8e8e" stroke-width="0.7"/><path d="M266 309.6v6.4M520 309.6v6.4" stroke="#999" stroke-width="0.8" fill="none"/><path d="M389.8 307.7h6.8l-3.4 2.8z" fill="#f0922a"/><circle cx="393.3" cy="313.9" r="2.9" fill="#2a2a2a" stroke="#f0922a" stroke-width="1"/><ellipse cx="393.3" cy="313.9" rx="0.9" ry="1.5" fill="none" stroke="#c87a28" stroke-width="0.6"/></svg>
<svg class="abs" style="overflow:visible;left:1.7px;top:308.5px;width:764.4px;height:127.8px" viewBox="11.2 319 764.4 127.8">
<rect x="11.2" y="319" width="764.4" height="127.8" fill="#000"/>
<path d="M87.2 319V446.8M163.75 319V446.8M240.3 319V446.8M316.85 319V446.8M393.4 319V446.8M469.95 319V446.8M546.5 319V446.8M623.05 319V446.8M699.6 319V446.8" stroke="#5a5a5a" stroke-width="0.6" stroke-dasharray="0.7 1.85" fill="none"/>
<path d="M10.25 433.9H775.6M10.25 421.12H775.6M10.25 408.34H775.6M10.25 395.56H775.6M10.25 382.78H775.6M10.25 370H775.6M10.25 357.22H775.6M10.25 344.44H775.6M10.25 331.66H775.6" stroke="#6a6a6a" stroke-width="0.7" stroke-dasharray="0.8 14.51" fill="none"/>
<polygon points="11.2,344.49 12.81,346.19 14.21,344.25 15.39,346.62 16.6,344.58 17.84,346.37 19.65,344.72 21.48,346.16 22.84,344.33 24.2,347.08 25.76,344.78 27.29,346.18 28.59,344.81 29.96,346.8 31.32,344.91 32.64,346.79 34.4,344.86 36.24,346.24 37.92,344.34 39.09,346.9 40.65,344.99 42.28,346.81 43.75,344.96 45.23,346.9 46.88,344.78 48.6,346.44 50.22,344.22 51.49,346.24 53.17,344.32 54.6,347.15 56.06,344.69 57.79,347.14 59.23,344.52 61.05,346.28 62.36,344.41 63.92,346.42 65.36,344.53 67.18,346.93 68.76,344.81 70.54,347.04 72.25,344.55 73.47,346.86 74.67,344.39 76.06,346.16 77.32,344.29 78.48,347.15 79.74,344.43 81.14,346.25 82.99,344.62 84.2,346.22 85.53,344.95 86.7,347.24 87.95,344.69 89.47,347.27 91.11,344.44 92.38,347.03 94.07,344.5 95.79,347.28 97.5,344.94 98.81,346.72 99.98,344.23 101.31,346.93 102.78,345.04 104.6,346.54 105.9,344.38 107.49,347.18 108.98,344.79 110.19,346.89 111.88,344.88 113.16,347.05 114.87,345.07 116.3,347.24 117.57,344.31 119.35,347.07 121.08,345.08 122.48,346.76 123.64,345.07 125.16,347.22 126.92,344.94 128.24,346.45 129.8,344.43 131.04,347.19 132.51,344.73 133.96,347.2 135.48,344.67 136.94,346.32 138.65,344.36 140.31,346.77 141.82,344.7 143.04,346.77 144.39,344.9 145.93,347.01 147.39,344.75 148.9,346.93 150.42,344.63 152.06,347.15 153.39,344.7 155.13,346.26 156.59,344.27 157.79,346.9 159.57,344.34 161.18,346.27 163.01,344.4 164.44,346.68 166.17,344.35 167.68,346.51 169.06,344.85 170.59,346.63 171.98,344.76 173.17,347.28 175,344.29 176.18,347.03 177.42,344.58 179.14,346.41 180.94,344.71 182.15,346.17 183.6,344.27 185.19,347.06 186.94,344.26 188.41,346.51 190.21,344.44 191.72,346.39 192.99,344.25 194.36,346.47 195.71,344.65 197.1,346.12 198.26,344.86 199.55,346.67 200.77,344.94 202.27,347.1 203.77,344.82 205.16,347.1 206.76,344.56 207.94,346.26 209.61,344.43 210.82,347.11 212.44,344.45 213.8,346.65 215.26,344.44 217.09,346.76 218.91,344.48 220.07,346.56 221.57,344.38 222.72,346.42 224.15,344.24 225.51,346.38 227.03,344.88 228.69,347.15 230.06,345.09 231.72,346.87 233.46,345 235.12,347.07 236.64,344.65 238.35,347.09 240.12,344.81 241.43,346.14 242.84,344.29 244.38,346.85 246,344.64 247.71,347 249.24,344.79 250.9,346.4 252.24,344.86 253.91,347.27 255.33,344.63 257.01,346.84 258.22,344.33 259.89,346.47 261.05,344.25 262.67,346.93 264.02,344.66 265.5,346.24 266.79,345.08 267.95,346.65 269.78,344.6 271.07,347.23 272.63,344.33 274.45,346.26 275.95,345 277.26,347.18 278.43,344.2 279.9,346.46 281.29,344.48 282.44,347 283.67,345.03 285.45,346.45 286.88,345.1 288.28,346.61 289.47,344.29 290.82,347.22 292.15,344.66 293.56,347.25 295.28,344.77 297.09,346.76 298.27,344.86 299.95,346.87 301.14,345.03 302.62,346.51 304.28,345.08 305.89,346.46 307.32,344.35 308.61,347.19 309.92,345.02 311.38,346.27 312.6,344.51 313.91,346.41 315.68,344.87 317.12,346.73 318.51,344.26 320.34,346.25 321.93,344.98 323.27,346.4 324.73,345.06 326.49,346.13 328.14,345.01 329.7,346.1 331.5,344.94 333.33,346.4 334.59,344.67 336.4,346.97 338.08,344.61 339.26,347.04 341.05,344.78 342.29,346.4 343.93,344.3 345.45,346.8 346.76,344.74 348.12,346.65 349.72,345 351.03,346.4 352.68,344.48 354.17,346.91 355.5,344.8 356.81,346.14 358.26,344.81 359.97,346.99 361.26,345.07 362.98,346.38 364.67,344.47 366.16,346.32 367.6,344.8 368.86,346.57 370.69,344.33 371.88,346.57 373.65,344.86 375.45,346.5 377.26,344.87 378.87,346.55 380.25,344.35 381.6,346.52 382.84,345.07 384.24,347.09 385.69,344.24 387.1,347.2 388.5,345.01 389.94,347.07 391.12,344.23 392.91,346.41 394.69,344.51 396.51,346.84 398.17,344.48 399.32,347.01 400.91,345.05 402.23,346.67 404.04,344.55 405.49,346.69 406.77,344.92 408.5,347.03 409.88,344.49 411.58,346.19 413.25,344.42 414.43,346.76 416.26,345 417.6,346.2 419.1,344.84 420.41,346.6 422.03,344.87 423.65,346.25 425,344.71 426.67,346.34 427.99,344.34 429.55,346.49 431.39,344.66 433.11,346.88 434.33,344.63 436.07,347.2 437.42,344.31 439.25,346.8 440.66,344.98 442,347.03 443.22,344.74 444.52,346.54 445.82,344.43 447.42,346.34 448.8,344.81 450.17,346.34 451.7,344.26 453.13,346.76 454.34,344.35 455.78,346.44 457.6,344.48 459,346.6 460.85,344.53 462.5,346.34 464.29,344.58 465.72,347.16 466.98,344.21 468.58,347.19 470.17,344.53 471.42,346.44 473.22,344.3 474.93,347.26 476.17,345.05 477.66,346.16 479.08,345.01 480.81,346.29 482.11,344.56 483.84,346.32 485.27,344.67 486.51,346.4 488.29,344.24 489.97,346.15 491.2,344.74 492.79,346.47 494.35,344.58 495.81,346.63 497.39,344.64 499.08,347.04 500.35,344.63 501.59,346.62 503.05,344.66 504.65,346.2 506.34,344.66 507.84,346.55 509.09,344.97 510.75,347.08 512.59,344.64 514.38,346.3 516.18,344.26 517.86,346.29 519.2,344.93 520.71,347.2 522.04,344.66 523.21,346.32 525.02,344.81 526.29,347.04 527.81,344.77 529.57,346.77 531.34,344.29 532.93,346.57 534.26,345.09 535.67,347.02 536.94,344.87 538.66,346.4 540.5,344.73 541.87,346.1 543.13,344.75 544.64,347.17 545.94,344.79 547.1,346.53 548.5,344.4 550.06,346.35 551.54,344.32 552.86,346.28 554.46,344.98 555.89,346.42 557.49,344.71 559.09,346.63 560.76,344.42 561.94,346.74 563.25,344.25 564.41,346.76 565.66,344.38 567.17,346.87 568.44,344.48 569.62,347.17 571.27,344.21 572.95,346.66 574.41,344.4 575.73,346.15 577.4,344.83 579.05,346.42 580.5,344.91 581.84,346.87 583.14,344.99 584.47,346.38 586.28,344.87 588.05,346.49 589.84,344.77 591.45,347.27 593.19,344.83 594.65,346.97 596.01,344.39 597.22,347.19 598.38,344.3 599.78,346.27 600.95,344.82 602.59,346.98 604.16,344.53 605.88,347.17 607.64,345.02 608.86,346.35 610.04,344.96 611.63,347.09 612.98,344.29 614.66,346.35 616.11,344.22 617.46,346.96 618.83,345.07 620.58,346.84 622.02,344.59 623.41,346.95 624.71,344.98 626.43,346.3 627.73,344.89 628.88,346.69 630.59,344.37 631.98,347.1 633.79,344.46 635.43,346.7 637.02,344.27 638.66,347.04 640.06,344.56 641.84,346.2 643,344.39 644.78,346.7 646.55,344.41 648.07,347.01 649.68,344.51 650.94,347.11 652.6,344.35 654.3,346.8 655.77,345 657.05,346.46 658.79,344.34 660.12,346.49 661.38,344.5 663.21,346.97 665.04,344.29 666.88,347.05 668.33,344.38 669.55,346.35 670.73,344.56 672.36,346.7 673.84,344.33 675.27,346.99 676.72,344.72 678.17,346.37 679.93,344.9 681.68,346.92 683.15,344.48 684.37,346.6 686.02,344.77 687.46,346.65 688.9,344.81 690.18,346.89 691.6,344.64 692.78,346.75 694.47,345.05 695.69,346.79 697.35,344.66 699.08,346.73 700.89,344.39 702.31,347.02 704.15,344.52 705.5,346.58 706.94,344.58 708.33,346.42 710,345.05 711.31,347.06 712.61,344.32 714.32,346.86 715.87,344.4 717.26,346.87 718.98,344.62 720.52,346.25 721.92,344.97 723.33,346.4 724.61,344.2 725.96,346.39 727.44,344.59 729.05,346.53 730.8,344.25 732.59,347.04 734.32,344.77 735.48,347.24 736.8,344.29 738.11,347.03 739.37,345.01 740.64,347.17 742.34,344.8 744.04,347.11 745.67,344.68 747.13,347.16 748.46,344.41 749.96,346.17 751.21,344.64 752.74,347.14 754.48,344.62 756.09,347.11 757.54,345.06 759.13,346.86 760.71,344.81 762.09,347.28 763.58,345.01 765.23,346.85 766.99,344.53 768.5,347.02 769.96,344.58 771.69,346.45 773.12,344.65 774.62,347.27 774.62,399.51 773.12,401.96 771.69,399.31 769.96,401.7 768.5,400.05 766.99,401.77 765.23,399.89 763.58,402.17 762.09,399.69 760.71,401.36 759.13,400.27 757.54,402.13 756.09,399.85 754.48,401.69 752.74,400.29 751.21,401.75 749.96,399.74 748.46,402.07 747.13,399.63 745.67,401.53 744.04,400.06 742.34,401.4 740.64,399.57 739.37,401.49 738.11,399.88 736.8,402.07 735.48,399.51 734.32,402.19 732.59,400.13 730.8,401.45 729.05,399.19 727.44,401.63 725.96,399.94 724.61,401.55 723.33,399.79 721.92,401.96 720.52,399.3 718.98,401.94 717.26,399.32 715.87,401.33 714.32,399.74 712.61,401.5 711.31,399.83 710,401.73 708.33,400.03 706.94,401.57 705.5,400.28 704.15,402.15 702.31,400.15 700.89,401.58 699.08,399.81 697.35,401.62 695.69,399.65 694.47,401.73 692.78,400.11 691.6,401.32 690.18,399.37 688.9,401.36 687.46,399.55 686.02,401.97 684.37,399.36 683.15,401.63 681.68,399.53 679.93,401.57 678.17,399.43 676.72,401.53 675.27,399.21 673.84,401.66 672.36,399.54 670.73,401.49 669.55,399.83 668.33,401.63 666.88,399.42 665.04,401.85 663.21,400.18 661.38,402.03 660.12,399.67 658.79,402.06 657.05,399.46 655.77,401.99 654.3,400.15 652.6,401.81 650.94,399.51 649.68,401.91 648.07,399.4 646.55,401.79 644.78,399.84 643,401.96 641.84,399.23 640.06,401.84 638.66,399.55 637.02,401.49 635.43,400.17 633.79,402.01 631.98,399.99 630.59,401.75 628.88,399.71 627.73,401.32 626.43,400.3 624.71,402.12 623.41,399.65 622.02,401.5 620.58,400.26 618.83,401.75 617.46,399.86 616.11,401.97 614.66,399.92 612.98,402.11 611.63,399.54 610.04,401.47 608.86,400.17 607.64,401.35 605.88,400.22 604.16,401.46 602.59,400.22 600.95,401.63 599.78,400.27 598.38,401.36 597.22,400.13 596.01,401.64 594.65,399.62 593.19,401.43 591.45,399.74 589.84,401.58 588.05,400.01 586.28,401.91 584.47,399.41 583.14,402.19 581.84,399.14 580.5,401.73 579.05,399.64 577.4,401.44 575.73,399.9 574.41,402.11 572.95,399.41 571.27,401.44 569.62,399.36 568.44,401.93 567.17,399.32 565.66,401.65 564.41,399.17 563.25,401.5 561.94,399.81 560.76,401.39 559.09,399.18 557.49,401.88 555.89,400.29 554.46,401.5 552.86,400.19 551.54,401.36 550.06,399.55 548.5,401.67 547.1,400.17 545.94,402.18 544.64,400.14 543.13,401.81 541.87,400.26 540.5,401.6 538.66,399.53 536.94,402.16 535.67,399.77 534.26,401.68 532.93,399.34 531.34,401.31 529.57,399.6 527.81,401.88 526.29,400.16 525.02,401.39 523.21,400.11 522.04,401.91 520.71,400.05 519.2,402.07 517.86,399.22 516.18,401.88 514.38,399.35 512.59,401.34 510.75,400.07 509.09,401.3 507.84,399.16 506.34,402.15 504.65,399.42 503.05,402.16 501.59,400.19 500.35,402.1 499.08,399.75 497.39,401.99 495.81,400.27 494.35,401.61 492.79,399.8 491.2,401.7 489.97,399.29 488.29,401.69 486.51,399.43 485.27,401.85 483.84,400.04 482.11,401.44 480.81,399.36 479.08,401.64 477.66,399.19 476.17,401.32 474.93,400.06 473.22,401.76 471.42,399.67 470.17,401.75 468.58,400.19 466.98,401.7 465.72,399.75 464.29,401.46 462.5,400.29 460.85,402.02 459,399.26 457.6,401.69 455.78,399.93 454.34,401.57 453.13,399.53 451.7,402.11 450.17,399.35 448.8,402.03 447.42,400.29 445.82,401.66 444.52,400.13 443.22,401.64 442,399.17 440.66,401.8 439.25,399.18 437.42,402.03 436.07,400.25 434.33,401.46 433.11,399.11 431.39,401.99 429.55,399.82 427.99,401.4 426.67,400 425,401.86 423.65,399.29 422.03,401.44 420.41,399.56 419.1,401.8 417.6,400.18 416.26,401.31 414.43,399.91 413.25,402.14 411.58,400.06 409.88,401.87 408.5,399.57 406.77,401.54 405.49,399.19 404.04,401.97 402.23,399.15 400.91,402.18 399.32,399.2 398.17,401.95 396.51,399.99 394.69,401.95 392.91,399.4 391.12,402.14 389.94,399.38 388.5,402.17 387.1,400.07 385.69,401.77 384.24,399.31 382.84,402.01 381.6,399.15 380.25,402.2 378.87,399.85 377.26,402.17 375.45,400.08 373.65,401.3 371.88,399.22 370.69,402.15 368.86,400.04 367.6,401.35 366.16,400.03 364.67,401.34 362.98,400.03 361.26,401.92 359.97,399.69 358.26,402.02 356.81,399.89 355.5,401.37 354.17,399.8 352.68,402.18 351.03,399.15 349.72,401.77 348.12,399.15 346.76,402.19 345.45,399.83 343.93,402.14 342.29,399.54 341.05,401.93 339.26,400.02 338.08,401.7 336.4,399.52 334.59,401.59 333.33,400.17 331.5,401.43 329.7,399.83 328.14,401.77 326.49,400.26 324.73,401.44 323.27,399.82 321.93,402.01 320.34,399.7 318.51,401.95 317.12,399.85 315.68,401.83 313.91,399.62 312.6,402.12 311.38,400.07 309.92,401.3 308.61,399.7 307.32,402.05 305.89,399.63 304.28,401.97 302.62,399.94 301.14,402.09 299.95,399.96 298.27,401.79 297.09,399.44 295.28,401.38 293.56,399.24 292.15,402.03 290.82,400 289.47,401.45 288.28,399.97 286.88,401.67 285.45,399.85 283.67,401.56 282.44,399.29 281.29,401.44 279.9,400.13 278.43,401.76 277.26,399.72 275.95,401.57 274.45,399.32 272.63,401.73 271.07,400.05 269.78,401.96 267.95,399.32 266.79,401.36 265.5,399.23 264.02,401.78 262.67,399.49 261.05,401.96 259.89,399.62 258.22,401.97 257.01,399.53 255.33,401.58 253.91,399.71 252.24,402.02 250.9,400.21 249.24,402.14 247.71,399.7 246,402.2 244.38,399.55 242.84,401.45 241.43,400.14 240.12,401.58 238.35,399.6 236.64,401.45 235.12,400.13 233.46,401.64 231.72,400.25 230.06,402.07 228.69,399.83 227.03,401.61 225.51,399.6 224.15,402.18 222.72,400.19 221.57,401.75 220.07,399.73 218.91,401.88 217.09,400.01 215.26,401.33 213.8,400.11 212.44,401.98 210.82,399.26 209.61,402.05 207.94,400.22 206.76,401.89 205.16,399.45 203.77,401.32 202.27,399.83 200.77,401.81 199.55,399.18 198.26,401.7 197.1,400 195.71,402.04 194.36,399.39 192.99,402.02 191.72,400.17 190.21,402.08 188.41,399.64 186.94,401.42 185.19,400.2 183.6,401.36 182.15,399.47 180.94,401.57 179.14,400.12 177.42,401.38 176.18,399.98 175,401.96 173.17,399.35 171.98,401.74 170.59,400.28 169.06,402.18 167.68,400.07 166.17,401.81 164.44,399.11 163.01,401.34 161.18,399.24 159.57,401.56 157.79,399.36 156.59,401.98 155.13,400.15 153.39,401.35 152.06,399.17 150.42,401.35 148.9,399.76 147.39,401.75 145.93,399.21 144.39,401.74 143.04,400 141.82,401.49 140.31,399.91 138.65,401.77 136.94,400.3 135.48,402.18 133.96,399.7 132.51,401.39 131.04,399.88 129.8,401.82 128.24,400.01 126.92,402.01 125.16,399.78 123.64,401.62 122.48,400.14 121.08,401.61 119.35,400.12 117.57,402.06 116.3,399.43 114.87,401.84 113.16,399.9 111.88,401.77 110.19,399.21 108.98,401.48 107.49,399.29 105.9,402.02 104.6,400.04 102.78,401.31 101.31,399.15 99.98,401.95 98.81,399.87 97.5,401.53 95.79,399.28 94.07,402 92.38,399.66 91.11,401.87 89.47,399.26 87.95,402.18 86.7,399.67 85.53,402.05 84.2,399.89 82.99,401.76 81.14,399.28 79.74,401.89 78.48,399.56 77.32,401.87 76.06,400.3 74.67,402.05 73.47,400.23 72.25,401.84 70.54,399.25 68.76,402.15 67.18,399.68 65.36,401.69 63.92,400.3 62.36,401.76 61.05,400.09 59.23,401.4 57.79,399.97 56.06,401.4 54.6,400.2 53.17,401.98 51.49,400.23 50.22,401.78 48.6,399.84 46.88,401.31 45.23,400.23 43.75,401.35 42.28,399.6 40.65,401.92 39.09,399.38 37.92,401.76 36.24,399.8 34.4,401.94 32.64,399.67 31.32,401.57 29.96,399.76 28.59,401.82 27.29,400.23 25.76,401.86 24.2,400.08 22.84,402.09 21.48,399.27 19.65,401.84 17.84,399.55 16.6,401.46 15.39,400.22 14.21,401.74 12.81,399.66 11.2,402.06" fill="#fbf004"/>
<path d="M12.2 347V399.5M13.9 347V399.5M15.6 347V399.5M22.4 347V399.5M29.2 347V399.5M30.9 347V399.5M32.6 347V399.5M34.3 347V399.5M54.7 347V399.5M58.1 347V399.5M61.5 347V399.5M63.2 347V399.5M64.9 347V399.5M71.7 347V399.5M78.5 347V399.5M80.2 347V399.5M81.9 347V399.5M83.6 347V399.5M85.3 347V399.5M90.4 347V399.5M93.8 347V399.5M95.5 347V399.5M102.3 347V399.5M104 347V399.5M105.7 347V399.5M112.5 347V399.5M114.2 347V399.5M115.9 347V399.5M119.3 347V399.5M121 347V399.5M122.7 347V399.5M124.4 347V399.5M127.8 347V399.5M131.2 347V399.5M134.6 347V399.5M136.3 347V399.5M139.7 347V399.5M143.1 347V399.5M144.8 347V399.5M153.3 347V399.5M158.4 347V399.5M161.8 347V399.5M166.9 347V399.5M168.6 347V399.5M173.7 347V399.5M175.4 347V399.5M178.8 347V399.5M182.2 347V399.5M183.9 347V399.5M185.6 347V399.5M189 347V399.5M192.4 347V399.5M195.8 347V399.5M200.9 347V399.5M202.6 347V399.5M211.1 347V399.5M212.8 347V399.5M219.6 347V399.5M228.1 347V399.5M229.8 347V399.5M233.2 347V399.5M241.7 347V399.5M243.4 347V399.5M245.1 347V399.5M246.8 347V399.5M253.6 347V399.5M262.1 347V399.5M270.6 347V399.5M272.3 347V399.5M277.4 347V399.5M282.5 347V399.5M287.6 347V399.5M289.3 347V399.5M291 347V399.5M296.1 347V399.5M297.8 347V399.5M302.9 347V399.5M311.4 347V399.5M314.8 347V399.5M316.5 347V399.5M318.2 347V399.5M321.6 347V399.5M325 347V399.5M328.4 347V399.5M330.1 347V399.5M333.5 347V399.5M335.2 347V399.5M340.3 347V399.5M343.7 347V399.5M347.1 347V399.5M348.8 347V399.5M353.9 347V399.5M357.3 347V399.5M360.7 347V399.5M369.2 347V399.5M370.9 347V399.5M372.6 347V399.5M374.3 347V399.5M376 347V399.5M377.7 347V399.5M382.8 347V399.5M387.9 347V399.5M391.3 347V399.5M393 347V399.5M396.4 347V399.5M404.9 347V399.5M406.6 347V399.5M408.3 347V399.5M413.4 347V399.5M415.1 347V399.5M416.8 347V399.5M418.5 347V399.5M425.3 347V399.5M433.8 347V399.5M435.5 347V399.5M442.3 347V399.5M447.4 347V399.5M449.1 347V399.5M450.8 347V399.5M452.5 347V399.5M454.2 347V399.5M455.9 347V399.5M457.6 347V399.5M459.3 347V399.5M462.7 347V399.5M466.1 347V399.5M467.8 347V399.5M471.2 347V399.5M478 347V399.5M479.7 347V399.5M481.4 347V399.5M488.2 347V399.5M489.9 347V399.5M493.3 347V399.5M496.7 347V399.5M498.4 347V399.5M500.1 347V399.5M505.2 347V399.5M508.6 347V399.5M510.3 347V399.5M512 347V399.5M513.7 347V399.5M517.1 347V399.5M518.8 347V399.5M520.5 347V399.5M522.2 347V399.5M525.6 347V399.5M529 347V399.5M534.1 347V399.5M535.8 347V399.5M537.5 347V399.5M539.2 347V399.5M540.9 347V399.5M542.6 347V399.5M549.4 347V399.5M551.1 347V399.5M554.5 347V399.5M557.9 347V399.5M561.3 347V399.5M564.7 347V399.5M566.4 347V399.5M568.1 347V399.5M573.2 347V399.5M574.9 347V399.5M578.3 347V399.5M581.7 347V399.5M583.4 347V399.5M588.5 347V399.5M590.2 347V399.5M591.9 347V399.5M595.3 347V399.5M597 347V399.5M598.7 347V399.5M607.2 347V399.5M608.9 347V399.5M612.3 347V399.5M615.7 347V399.5M619.1 347V399.5M624.2 347V399.5M625.9 347V399.5M629.3 347V399.5M632.7 347V399.5M634.4 347V399.5M637.8 347V399.5M639.5 347V399.5M641.2 347V399.5M644.6 347V399.5M648 347V399.5M651.4 347V399.5M658.2 347V399.5M661.6 347V399.5M665 347V399.5M670.1 347V399.5M676.9 347V399.5M680.3 347V399.5M682 347V399.5M683.7 347V399.5M685.4 347V399.5M688.8 347V399.5M690.5 347V399.5M693.9 347V399.5M695.6 347V399.5M704.1 347V399.5M709.2 347V399.5M710.9 347V399.5M712.6 347V399.5M716 347V399.5M717.7 347V399.5M719.4 347V399.5M721.1 347V399.5M726.2 347V399.5M731.3 347V399.5M736.4 347V399.5M738.1 347V399.5M743.2 347V399.5M748.3 347V399.5M750 347V399.5M751.7 347V399.5M753.4 347V399.5M763.6 347V399.5M770.4 347V399.5M772.1 347V399.5M775.5 347V399.5" stroke="#f0e400" stroke-width="0.8" opacity="0.55" fill="none"/>
<path d="M28.4 433.9H775.6" stroke="#d4d4d4" stroke-width="0.9" stroke-dasharray="2.1 2.3" fill="none"/>
<path d="M12.2 321V432.8" stroke="#c87818" stroke-width="1" stroke-dasharray="1 1.56" fill="none"/>
<path d="M12.8 429h11.4l3.4 4.9l-3.4 4.9h-11.4z" fill="#fbf02a"/>
<g font-family="Liberation Sans, sans-serif">
<text x="14.2" y="436.1" font-size="6" font-weight="bold" fill="#222" letter-spacing="0.7">C1</text>
<g font-size="4.6" fill="#b4b4b4">
<text x="87.6" y="445.2" text-anchor="middle">-8 µs</text>
<text x="164.15" y="445.2" text-anchor="middle">-6 µs</text>
<text x="240.7" y="445.2" text-anchor="middle">-4 µs</text>
<text x="317.25" y="445.2" text-anchor="middle">-2 µs</text>
<text x="393.8" y="445.2" text-anchor="middle">0 s</text>
<text x="470.35" y="445.2" text-anchor="middle">2 µs</text>
<text x="546.9" y="445.2" text-anchor="middle">4 µs</text>
<text x="623.45" y="445.2" text-anchor="middle">6 µs</text>
<text x="700" y="445.2" text-anchor="middle">8 µs</text>
</g><g font-size="4.8" fill="#e8e060" text-anchor="end">
<text x="774" y="333.26" fill="#e8e060">2.72 V</text>
<text x="774" y="346.04" fill="#3c3a00">2.38 V</text>
<text x="774" y="358.82" fill="#3c3a00">2.04 V</text>
<text x="774" y="371.6" fill="#3c3a00">1.70 V</text>
<text x="774" y="384.38" fill="#3c3a00">1.36 V</text>
<text x="774" y="397.16" fill="#3c3a00">1.02 V</text>
<text x="774" y="409.94" fill="#e8e060">680 mV</text>
<text x="774" y="422.72" fill="#e8e060">340 mV</text>
<text x="774" y="435.5" fill="#e8e060">0 V</text>
</g></g>
<path d="M388.6 318.4h9.2l-4.6 4.2z" fill="#f0922a"/><path d="M389.2 323.5h8.2v8.2l-4.1 3.4l-4.1-3.4z" fill="#1a1208" stroke="#f0922a" stroke-width="1"/>
<text x="393.3" y="330.6" font-family="Liberation Sans, sans-serif" font-size="6.4" font-weight="bold" fill="#f0922a" text-anchor="middle">T</text>
<path d="M757.2 321.7H772.8V337.2z" fill="#787878"/><circle cx="769.6" cy="324.6" r="1.5" fill="none" stroke="#e8e8e8" stroke-width="0.7"/><path d="M768.5 325.8l-3 3.2" stroke="#e8e8e8" stroke-width="0.8"/>
<path d="M775.5 372.4l-8.6 4.4l8.6 4.4z" fill="#f4f0b0" stroke="#c8c070" stroke-width="0.5"/>
</svg>
<div class="abs" style="left:0;top:436.8px;width:845px;height:37.2px;background:#2e2e2e"></div>
<div class="abs" style="left:0.5px;top:436.3px;width:766.5px;height:0.9px;background:#6a6a6a"></div>
<div class="badge" style="left:1.9px;top:438.7px;width:38.7px;height:34.8px;border-radius:1.5px;font-size:6.3px;color:#2a2e3a"><div class="h" style="background:#fdf23a;color:#222;height:8.3px;padding-top:1.4px;padding-left:1.6px">Ch 1</div>
<div class="l" style="top:11.4px;left:2.6px">340 mV/div</div><div class="l" style="top:27.5px;left:2.6px">1 GHz</div>
<svg class="abs" style="left:3px;top:17.5px;width:8px;height:7px" viewBox="0 0 8 7"><path d="M1 6V2.5Q4 -0.5 6.5 3M3.2 6l1.6-3" stroke="#333" stroke-width="0.7" fill="none"/></svg>
</div>
<div class="chb" style="left:301px"><i style="background:#28a8a0"></i><b>2</b></div>
<div class="chb" style="left:320.9px"><i style="background:#b03652"></i><b>3</b></div>
<div class="chb" style="left:340.8px"><i style="background:#729c2c"></i><b>4</b></div>
<div class="chb" style="left:360.7px"><i style="background:#c87c28"></i><b>5</b></div>
<div class="chb" style="left:380.6px"><i style="background:#2238aa"></i><b>6</b></div>
<div class="chb" style="left:400.5px"><i style="background:#b03690"></i><b>7</b></div>
<div class="chb" style="left:420.4px"><i style="background:#1e9a80"></i><b>8</b></div>
<div class="chb" style="left:446.5px"><i style="background:#c87c28"></i><em>Add<br>New<br>Math</em></div>
<div class="chb" style="left:466.6px"><i style="background:#9a9a9a"></i><em>Add<br>New<br>Ref</em></div>
<div class="chb" style="left:486.7px"><i style="background:#9040b8"></i><em>Add<br>New<br>Bus</em></div>
<div class="chb" style="left:512.5px;width:17.4px"><i style="background:#4a4a4a"></i><em style="top:14px;font-size:5.8px">DVM</em></div>
<div class="chb" style="left:535px;width:17.4px"><i style="background:#4a4a4a"></i><em style="top:14px;font-size:5.8px">AFG</em></div>
<div class="blk" style="left:438.1px;top:437.6px;width:3.6px;height:36.4px;background:#252525"></div>
<div class="blk" style="left:506.9px;top:437.6px;width:3.4px;height:36.4px;background:#252525"></div>
<div class="blk" style="left:555.5px;top:437.6px;width:4px;height:36.4px;background:#252525"></div>
<div class="badge" style="left:561.8px;top:439.5px;width:89.4px;height:34.5px"><div class="h" style="background:#595a5c;color:#dfe3ea;height:7.1px;padding-top:0.7px">Horizontal</div>
<div class="l" style="left:3px;top:11.6px">2 µs/div</div>
<div class="l" style="left:50px;top:11.6px">20 µs</div>
<div class="l" style="left:3px;top:19.6px">SR: 3.125 GS/s</div>
<div class="l" style="left:50px;top:19.6px">320 ps/pt</div>
<div class="l" style="left:3px;top:27.6px">RL: 62.5 kpts</div>
<div class="l" style="left:56px;top:27.6px">50%</div>
<div class="abs" style="left:50px;top:28.4px;width:3.4px;height:3.4px;background:#e08020;border:0.6px solid #333"></div></div>
<div class="badge" style="left:656.3px;top:439.5px;;margin-left:-0.6px;width:70.6px;height:34.5px"><div class="h" style="background:#595a5c;color:#dfe3ea;height:7.1px;padding-top:0.7px">Trigger</div>
<div class="abs" style="left:3.4px;top:11.4px;width:12.4px;height:6.6px;background:#f5e61e;border:0.6px solid #555;border-radius:2px;font-size:5px;text-align:center;line-height:5.6px;color:#222">1</div>
<svg class="abs" style="left:22px;top:11.8px;width:7px;height:6px" viewBox="0 0 7 6"><path d="M0.5 5.2L6 0.6" stroke="#444" stroke-width="0.6"/></svg>
<div class="l" style="left:33px;top:11.6px">1.5 V</div></div>
<div class="badge" style="left:732.1px;top:439.5px;width:64.6px;height:34.5px"><div class="h" style="background:#595a5c;color:#dfe3ea;height:7.1px;padding-top:0.7px">Acquisition</div>
<div class="l" style="left:3px;top:11.6px">Auto,</div>
<div class="l" style="left:27.5px;top:11.6px">Analyze</div>
<div class="l" style="left:3px;top:19.6px">High Res: 12 bits</div>
<div class="l" style="left:3px;top:27.6px">12.554 kAcqs</div>
</div>
<div class="abs" style="left:801.5px;top:439.5px;width:38.8px;height:14.4px;background:#14d204;border-radius:1.8px;color:#b4f4aa;font-size:5.6px;text-align:center;line-height:14px">Triggered</div>
<div class="abs" style="left:767.5px;top:12.5px;width:7px;height:425px;background:#272727"></div>
<div class="abs" style="left:774.2px;top:13.5px;width:71px;height:423.3px;background:#2e2e2e"></div>
<div class="t" style="left:774.2px;width:71px;top:14.5px;text-align:center;font-size:7px;font-weight:bold;color:#f2f2f2">Add New...</div>
<div class="btn" style="left:776.8px;top:25.9px;width:28.2px;height:16.3px;padding-top:4.8px">Cursors</div>
<div class="btn" style="left:808.2px;top:25.9px;width:28.2px;height:16.3px;padding-top:4.8px">Note</div>
<div class="btn" style="left:776.8px;top:45.8px;width:28.2px;height:16.3px;padding-top:4.2px;color:#fff;font-size:7px;border-color:#777">Measure</div>
<div class="btn" style="left:808.2px;top:45.8px;width:28.2px;height:16.3px;padding-top:4.2px;font-size:7px">Search</div>
<div class="btn" style="left:776.8px;top:65.5px;width:28.2px;height:16.3px;padding-top:0;font-size:6.3px;line-height:7.9px">Results<br>Table</div>
<div class="btn" style="left:808.2px;top:65.5px;width:28.2px;height:16.3px;padding-top:5.1px">Plot</div>
<div class="abs" style="left:777px;top:86.6px;width:65px;height:0.8px;background:#444"></div>
<div class="badge" style="left:776.3px;top:92.3px;width:67px;height:59.8px;font-size:6.3px"><div class="h" style="background:#595a5c;color:#f4f4f4;height:7.6px;padding-top:0.8px;padding-left:1.6px;font-size:6.7px">Meas 1</div>
<div class="abs" style="right:2.6px;top:2px;width:9.4px;height:3.8px;background:#f8ec20"></div><div class="abs" style="right:7px;top:2px;width:0.6px;height:3.8px;background:#8a8420"></div>
<div class="l" style="top:10.9px;left:2.4px">Frequency</div>
<div class="l" style="top:19.2px;left:2.4px">µ': 40.00 MHz</div>
<div class="l" style="top:27.5px;left:2.4px">σ': 67.10 kHz</div>
<div class="l" style="top:35.8px;left:2.4px">M: 54.64 MHz</div>
<div class="l" style="top:44.1px;left:2.4px">m: 35.19 MHz</div>
<div class="l" style="top:52.4px;left:2.4px">N: 10016638</div>
</div>
<div class="badge" style="left:776.3px;top:155.5px;width:67px;height:60px;font-size:6.3px"><div class="h" style="background:#000;color:#f5e61e;height:7.6px;padding-top:0.8px;padding-left:1.6px;font-size:6.7px">Meas 2</div>
<div class="abs" style="right:2.6px;top:2px;width:9.4px;height:3.8px;background:#f8ec20"></div><div class="abs" style="right:7px;top:2px;width:0.6px;height:3.8px;background:#8a8420"></div>
<div class="l" style="top:10.9px;left:2.4px">Positive Pulse Width</div>
<div class="l" style="top:19.2px;left:2.4px">µ': 12.34 ns</div>
<div class="l" style="top:27.5px;left:2.4px">σ': 40.30 ps</div>
<div class="l" style="top:35.8px;left:2.4px">M: 14.18 ns</div>
<div class="l" style="top:44.1px;left:2.4px">m: 8.895 ns</div>
<div class="l" style="top:52.4px;left:2.4px">N: 10029188</div>
</div>
<div class="abs" style="left:770px;top:220.5px;width:1.6px;height:1.6px;background:#ccc;box-shadow:0 3.9px 0 #ccc,0 7.8px 0 #ccc"></div>
<div class="abs" style="left:776.1px;top:414.2px;width:63.3px;height:0.8px;background:#5e5a56"></div>
<div class="btn" style="left:776.5px;top:418.8px;width:28.2px;height:16.4px;border-radius:2.5px;border-color:#5c5c5c"></div>
<svg class="abs" style="left:776.5px;top:418.8px;width:28.2px;height:16.4px" viewBox="786 429.3 28.2 16.4"><path d="M794 438.4V431.2h8.2M794 438.4h4" stroke="#9a9a9a" stroke-width="0.6" fill="none" stroke-dasharray="1.2 0.5"/><circle cx="801.2" cy="436.8" r="2.3" fill="#3a3a3a" stroke="#d8d8d8" stroke-width="0.9"/><path d="M802.9 438.6l2.7 3.4" stroke="#e4e4e4" stroke-width="1.3" stroke-linecap="round"/></svg>
<svg class="abs" style="left:819px;top:419.3px;width:14px;height:16px" viewBox="828.5 429.8 14 16"><g stroke="#d0d0d0" stroke-width="0.8" fill="none"><ellipse cx="835.5" cy="432.3" rx="5.6" ry="1.7"/><path d="M829.9 432.3l1 11.2q4.6 2.4 9.2 0l1-11.2"/><path d="M833.3 434.4l0.3 9.4M835.5 434.6v9.6M837.7 434.4l-0.3 9.4" stroke-width="0.7" stroke="#b0b0b0"/></g></svg>
</div></body></html>
